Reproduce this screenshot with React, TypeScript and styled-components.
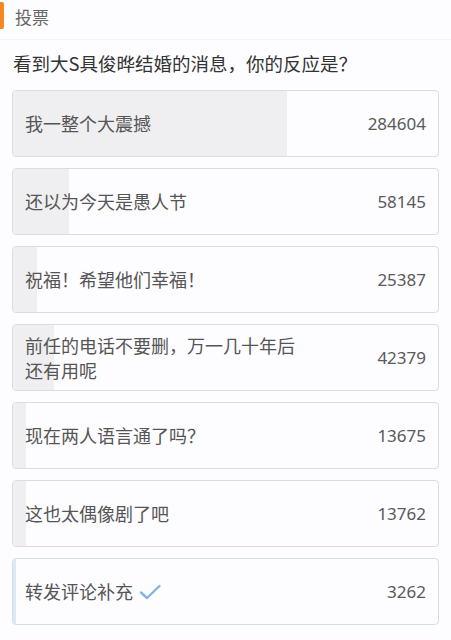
import React from 'react';
import styled, {createGlobalStyle} from 'styled-components';

const GlobalStyle = createGlobalStyle`
  body {
    margin: 0;
    background: #fdfcfe;
    font-family: "Noto Sans CJK SC", "Noto Sans", sans-serif;
  }
`;

const Page = styled.div`
  width: 451px;
  height: 640px;
  background: #fdfcfe;
  overflow: hidden;
`;

const Header = styled.div`
  display: flex;
  align-items: center;
  height: 40px;
  box-sizing: border-box;
  padding-bottom: 2px;
  border-bottom: 1px solid #f5f4f6;
`;

const Accent = styled.div`
  width: 4px;
  height: 27px;
  margin-top: -6px;
  background: #f5891f;
  border-radius: 0 2px 2px 0;
`;

const HeaderTitle = styled.span`
  margin-left: 11px;
  margin-top: -4px;
  font-size: 17px;
  color: #666;
`;

const Question = styled.div`
  padding: 10px 13px 0;
  height: 39px;
  box-sizing: border-box;
  font-size: 18.5px;
  color: #333;
  line-height: 27px;
  white-space: nowrap;
`;

const List = styled.div`
  display: flex;
  flex-direction: column;
  gap: 11px;
  padding: 11px 12px 0 12px;
`;

const Option = styled.div<{$selected?: boolean}>`
  position: relative;
  height: 67px;
  box-sizing: border-box;
  border: 1px solid ${p => (p.$selected ? '#d6dde6' : '#dcdbdf')};
  border-radius: 4px;
  background: #fdfcff;
  overflow: hidden;
`;

const Fill = styled.div<{$selected?: boolean}>`
  position: absolute;
  left: 0;
  top: 0;
  bottom: 0;
  background: ${p => (p.$selected ? '#dbe8f5' : '#efeef1')};
`;

const Content = styled.div`
  position: relative;
  display: flex;
  align-items: center;
  justify-content: space-between;
  height: 100%;
  padding: 0 12px 0 12px;
  color: #555;
`;

const Label = styled.span`
  display: flex;
  align-items: center;
  gap: 6px;
  font-size: 18px;
  line-height: 25px;
  max-width: 285px;
`;

const Count = styled.span`
  font-size: 17px;
  font-family: "Noto Sans", sans-serif;
  color: #5a5a5a;
`;

const Check = () => (
  <svg width="22" height="16" viewBox="0 0 22 16">
    <path d="M2 8.5 L8 14 L20.5 2" fill="none" stroke="#86b4e0" strokeWidth="2.4" strokeLinecap="round" strokeLinejoin="round"/>
  </svg>
);

const options = [
  {text: '我一整个大震撼', count: 284604},
  {text: '还以为今天是愚人节', count: 58145},
  {text: '祝福！希望他们幸福！', count: 25387},
  {text: '前任的电话不要删，万一几十年后还有用呢', count: 42379},
  {text: '现在两人语言通了吗？', count: 13675},
  {text: '这也太偶像剧了吧', count: 13762},
  {text: '转发评论补充', count: 3262, selected: true},
];

const total = options.reduce((s, o) => s + o.count, 0);

const App = () => (
  <Page>
    <GlobalStyle/>
    <Header>
      <Accent/>
      <HeaderTitle>投票</HeaderTitle>
    </Header>
    <Question>看到大S具俊晔结婚的消息，你的反应是？</Question>
    <List>
      {options.map(o => (
        <Option key={o.text} $selected={o.selected}>
          <Fill $selected={o.selected} style={{width: `${(o.count / total) * 100}%`}}/>
          <Content>
            <Label>
              {o.text}
              {o.selected && <Check/>}
            </Label>
            <Count>{o.count}</Count>
          </Content>
        </Option>
      ))}
    </List>
  </Page>
);

export default App;
